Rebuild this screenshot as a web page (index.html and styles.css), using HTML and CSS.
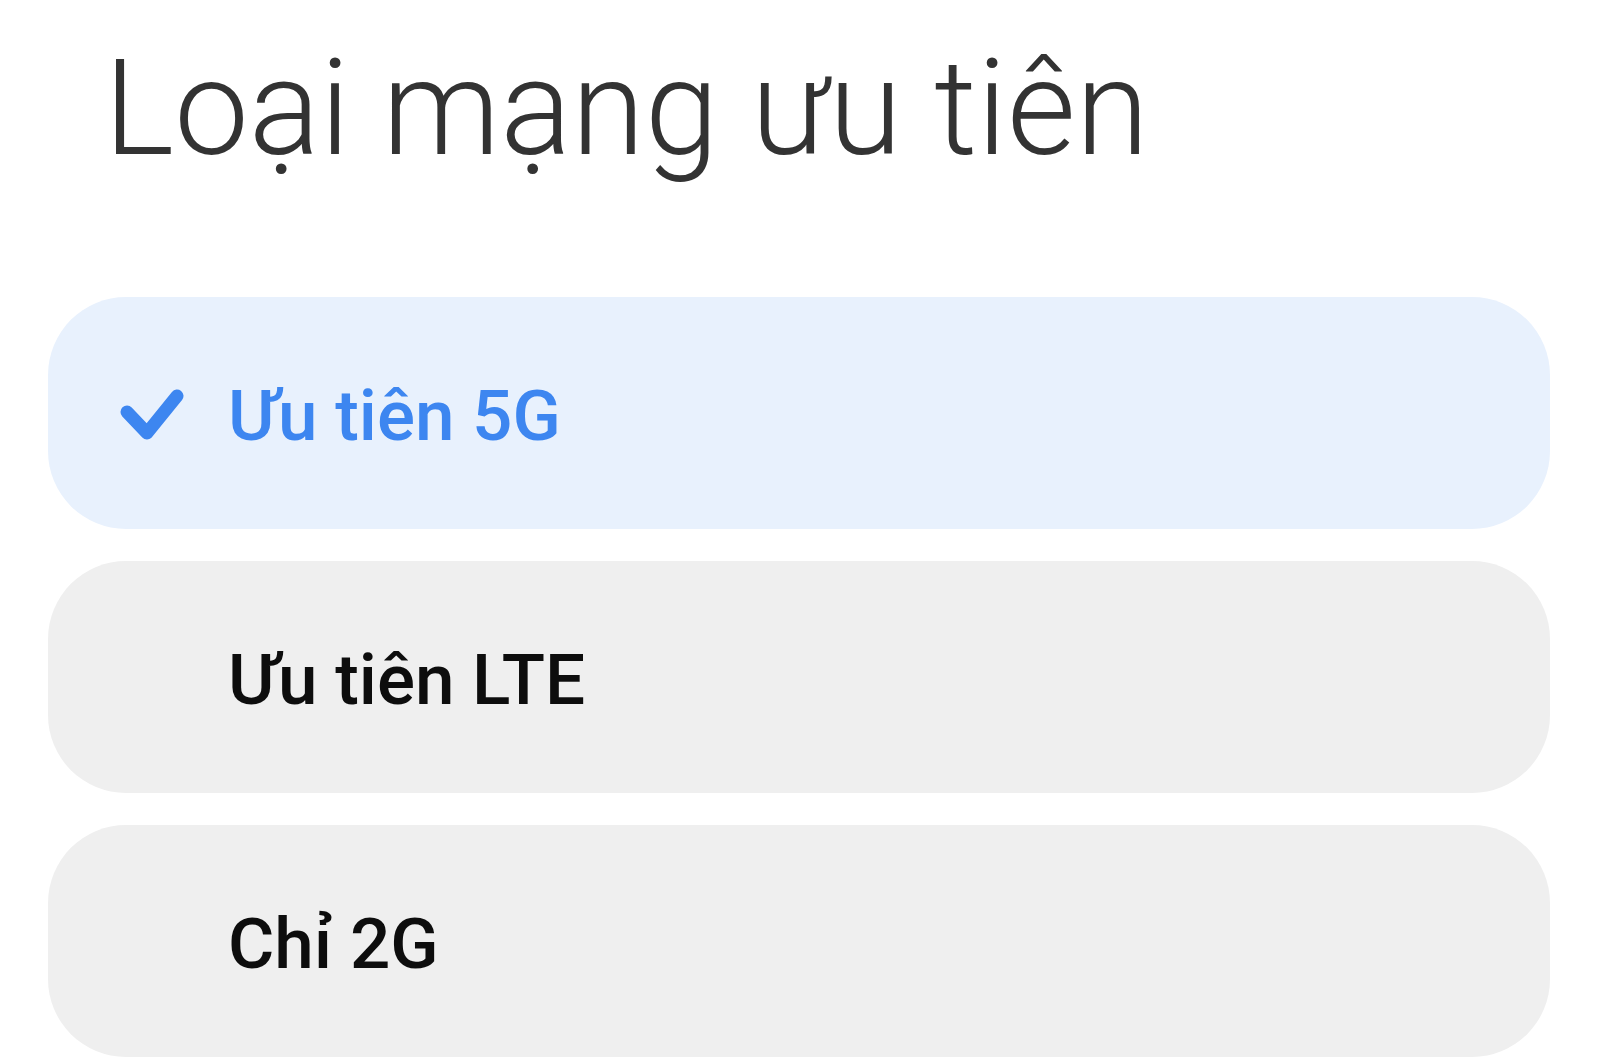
FILE: index.html
```html
<!DOCTYPE html>
<html lang="vi">
<head>
<meta charset="utf-8">
<title>Loại mạng ưu tiên</title>
<link rel="stylesheet" href="styles.css">
</head>
<body>
<div class="page">
  <h1 class="title">Loại mạng ưu tiên</h1>
  <div class="options">
    <div class="option selected">
      <span class="check">
        <svg width="64" height="54" viewBox="0 0 64 54"><polyline points="7,24 27,45 57,8" fill="none" stroke="#3d86f0" stroke-width="13" stroke-linecap="round" stroke-linejoin="round"/></svg>
      </span>
      <span class="label">Ưu tiên 5G</span>
    </div>
    <div class="option">
      <span class="check"></span>
      <span class="label">Ưu tiên LTE</span>
    </div>
    <div class="option">
      <span class="check"></span>
      <span class="label">Chỉ 2G</span>
    </div>
  </div>
</div>
</body>
</html>
```
FILE: styles.css
```css
html, body {
  margin: 0;
  padding: 0;
  background: #ffffff;
}
.page {
  width: 1600px;
  height: 1061px;
  overflow: hidden;
  font-family: Roboto, "Noto Sans", sans-serif;
  padding: 0 50px 0 48px;
  box-sizing: border-box;
}
.title {
  margin: 42px 0 0 0;
  padding-left: 56px;
  font-size: 133px;
  line-height: 134px;
  font-weight: 300;
  color: #333333;
  letter-spacing: 0;
}
.options {
  margin-top: 121px;
  display: flex;
  flex-direction: column;
  gap: 32px;
}
.option {
  height: 232px;
  border-radius: 78px;
  background: #efefef;
  display: flex;
  align-items: center;
  padding-left: 72px;
}
.option.selected {
  background: #e8f1fd;
}
.check {
  width: 108px;
  display: flex;
  align-items: center;
  margin-top: 4px;
}
.label {
  font-size: 71px;
  font-weight: 500;
  color: #0d0d0d;
  margin-top: 4px;
}
.selected .label {
  color: #3d86f0;
}
```
